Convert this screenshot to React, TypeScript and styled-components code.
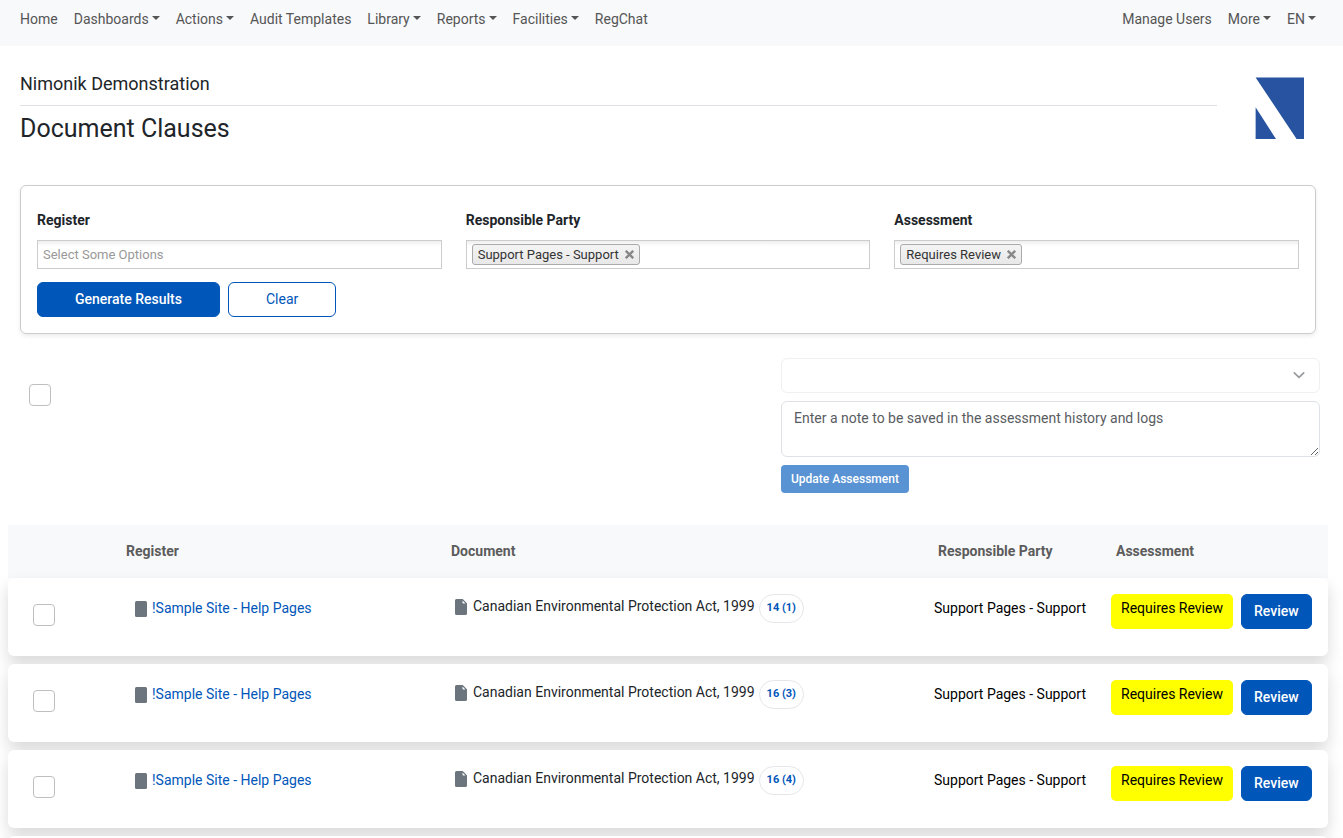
import React from "react";
import styled, { createGlobalStyle } from "styled-components";

const GlobalStyle = createGlobalStyle`
  *, *::before, *::after { box-sizing: border-box; }
  html { scrollbar-width: none; }
  body {
    margin: 0;
    background: #fff;
    color: #212529;
    font-family: Roboto, "Liberation Sans", sans-serif;
    font-size: 14px;
    line-height: 21px;
  }
  button, input, select, textarea { font: inherit; }
`;

const blue = "#0056b9";

const NavBar = styled.nav`
  display: flex;
  justify-content: space-between;
  height: 46px;
  padding: 9px 27px 0 20px;
  background: #f8f9fb;
`;

const NavGroup = styled.div`
  display: flex;
  gap: 16px;
`;

const NavLink = styled.a<{ $menu?: boolean }>`
  display: flex;
  align-items: center;
  height: 21px;
  color: #555;
  text-decoration: none;
  white-space: nowrap;

  &::after {
    content: "";
    display: ${(p) => (p.$menu ? "block" : "none")};
    margin: 0 0 4px 3px;
    border: 4px solid transparent;
    border-top-color: currentColor;
    border-bottom: 0;
  }
`;

const Masthead = styled.header`
  display: flex;
  justify-content: space-between;
  gap: 38px;
  padding: 28px 39px 0 20px;
`;

const Titles = styled.div`
  flex: 1;
`;

const Company = styled.h2`
  margin: 0;
  padding-bottom: 11px;
  border-bottom: 1px solid #dee2e6;
  font-size: 18px;
  line-height: 20px;
  font-weight: 400;
`;

const PageTitle = styled.h1`
  margin: 8px 0 0;
  font-size: 25px;
  line-height: 30px;
  font-weight: 400;
`;

const Logo = styled.svg`
  display: block;
  width: 49px;
  height: 62px;
  margin-top: 3px;
`;

const FilterCard = styled.form`
  margin: 41px 27px 0 20px;
  padding: 24px 16px 16px;
  border: 1px solid #ccc;
  border-radius: 6px;
  box-shadow: 0 2px 4px rgba(0, 0, 0, 0.08);
`;

const FilterGrid = styled.div`
  display: grid;
  grid-template-columns: repeat(3, minmax(0, 1fr));
  gap: 24px;
`;

const FieldLabel = styled.label`
  display: block;
  margin-bottom: 9px;
  font-weight: 700;
`;

const ChoiceBox = styled.div`
  display: flex;
  align-items: center;
  gap: 4px;
  height: 29px;
  padding: 0 5px;
  border: 1px solid #ccc;
  background: linear-gradient(#eee 0, #fff 5px);
`;

const ChoiceInput = styled.input`
  flex: 1;
  min-width: 0;
  padding: 0;
  border: 0;
  outline: 0;
  background: transparent;
  color: #222;
  font-size: 13px;
  &::placeholder { color: #999; opacity: 1; }
`;

const Chip = styled.span`
  display: flex;
  align-items: center;
  gap: 6px;
  height: 21px;
  padding: 0 5px;
  border: 1px solid #aaa;
  border-radius: 3px;
  background: linear-gradient(#f4f4f4, #e8e8e8);
  color: #333;
  font-size: 13px;
  white-space: nowrap;
`;

const ChipRemove = styled.button`
  display: flex;
  padding: 0;
  border: 0;
  background: none;
  color: #888;
`;

const Actions = styled.div`
  display: flex;
  gap: 8px;
  margin-top: 13px;
`;

const Button = styled.button<{ $outline?: boolean; $wide?: boolean }>`
  height: 35px;
  padding: 0 ${(p) => (p.$wide ? "37px" : "12px")};
  border: 1px solid ${blue};
  border-radius: 6px;
  background: ${(p) => (p.$outline ? "#fff" : blue)};
  color: ${(p) => (p.$outline ? blue : "#fff")};
  font-weight: ${(p) => (p.$outline ? 400 : 500)};
  white-space: nowrap;
`;

const BulkBar = styled.section`
  display: flex;
  justify-content: space-between;
  padding: 24px 23px 32px 29px;
`;

const Check = styled.input`
  appearance: none;
  display: block;
  width: 22px;
  height: 22px;
  margin: 0;
  border: 1px solid #bfbfbf;
  border-radius: 4px;
  background: #fff;
`;

const BulkCheck = styled.label`
  padding-top: 26px;
`;

const BulkForm = styled.form`
  display: flex;
  flex-direction: column;
  align-items: flex-start;
  gap: 8px;
  width: 42%;
  max-width: 539px;
`;

const SelectWrap = styled.div`
  position: relative;
  width: 100%;
  opacity: 0.5;

  svg {
    position: absolute;
    right: 14px;
    top: 11px;
    pointer-events: none;
  }
`;

const Select = styled.select`
  appearance: none;
  display: block;
  width: 100%;
  height: 35px;
  padding: 0 12px;
  border: 1px solid #dee2e6;
  border-radius: 6px;
  background: #fff;
  opacity: 1;
`;

const Note = styled.textarea`
  display: block;
  width: 100%;
  height: 56px;
  padding: 6px 12px;
  border: 1px solid #dee2e6;
  border-radius: 6px;
  resize: vertical;
  &::placeholder { color: #595c5f; opacity: 1; }
`;

const UpdateButton = styled.button`
  height: 28px;
  padding: 0 10px;
  border: 0;
  border-radius: 4px;
  background: #5993d4;
  color: #fff;
  font-size: 12px;
  font-weight: 500;
  white-space: nowrap;
`;

const Table = styled.table`
  display: block;
  margin: 0 15px 0 8px;
`;

const TableHead = styled.thead`
  display: block;
  background: #f8f9fb;
`;

const HeadRow = styled.tr`
  display: grid;
  grid-template-columns: 118fr 325fr 487fr 178fr 212fr;
  height: 53px;
  align-items: center;
`;

const HeadCell = styled.th`
  padding: 0;
  color: #5c5c5c;
  font-weight: 700;
  text-align: left;
`;

const TableBody = styled.tbody`
  display: flex;
  flex-direction: column;
  gap: 8px;
`;

const Row = styled.tr`
  display: grid;
  grid-template-columns: 111fr 320fr 479fr 177fr 201fr;
  height: 78px;
  padding: 16px 16px 0;
  border-radius: 6px;
  background: #fff;
  box-shadow: 0 8px 16px rgba(0, 0, 0, 0.15);
`;

const Cell = styled.td<{ $top?: number; $left?: number; $gap?: number }>`
  display: flex;
  align-items: flex-start;
  gap: ${(p) => p.$gap ?? 0}px;
  min-width: 0;
  padding: ${(p) => p.$top ?? 0}px 0 0 ${(p) => p.$left ?? 0}px;
  color: #000;
  white-space: nowrap;
`;

const RegisterLink = styled.a`
  color: ${blue};
  text-decoration: none;
`;

const DocName = styled.span`
  padding-top: 2px;
  color: #212529;
`;

const CountPill = styled.a`
  display: flex;
  align-items: center;
  height: 29px;
  padding: 0 7px 2px;
  border: 1px solid #e4e6ea;
  border-radius: 15px;
  color: ${blue};
  font-size: 11px;
  font-weight: 700;
  text-decoration: none;
`;

const DocTitle = styled.div`
  display: flex;
  gap: 6px;
`;

const Status = styled.span`
  height: 35px;
  padding: 4px 10px 0;
  border-radius: 5px;
  background: #ff0;
`;

const RowIcon = styled.svg<{ $top: number }>`
  flex: none;
  display: block;
  width: 12px;
  height: 16px;
  margin-top: ${(p) => p.$top}px;
  fill: #6c757d;
`;

const leftNav: { label: string; menu?: boolean }[] = [
  { label: "Home" },
  { label: "Dashboards", menu: true },
  { label: "Actions", menu: true },
  { label: "Audit Templates" },
  { label: "Library", menu: true },
  { label: "Reports", menu: true },
  { label: "Facilities", menu: true },
  { label: "RegChat" },
];

const rightNav: { label: string; menu?: boolean }[] = [
  { label: "Manage Users" },
  { label: "More", menu: true },
  { label: "EN", menu: true },
];

const filters: { id: string; label: string; chosen?: string }[] = [
  { id: "register", label: "Register" },
  { id: "party", label: "Responsible Party", chosen: "Support Pages - Support" },
  { id: "assessment", label: "Assessment", chosen: "Requires Review" },
];

const counts = ["14 (1)", "16 (3)", "16 (4)"];

function NavItems({ items }: { items: { label: string; menu?: boolean }[] }) {
  return (
    <NavGroup>
      {items.map((item) => (
        <NavLink key={item.label} href="#" $menu={item.menu}>
          {item.label}
        </NavLink>
      ))}
    </NavGroup>
  );
}

function ClauseRow({ count }: { count: string }) {
  return (
    <Row>
      <Cell $top={10} $left={9}>
        <Check type="checkbox" aria-label={`Select clause ${count}`} />
      </Cell>
      <Cell $top={4} $gap={5}>
        <RowIcon $top={3} viewBox="0 0 12 16">
          <rect width="12" height="16" rx="1.5" />
        </RowIcon>
        <RegisterLink href="#">!Sample Site - Help Pages</RegisterLink>
      </Cell>
      <Cell $gap={4}>
        <DocTitle>
          <RowIcon $top={5} viewBox="0 0 12 16">
            <path
              fillRule="evenodd"
              d="M1.5 0H7.3A1 1 0 0 1 8 .3L11.7 4A1 1 0 0 1 12 4.7V14.5A1.5 1.5 0 0 1 10.500 16H1.5A1.500 1.500 0 0 1 0 14.5V1.5A1.500 1.500 0 0 1 1.500 0M7.500 1.500V3.500A1 1 0 0 0 8.500 4.500H10.500Z"
            />
          </RowIcon>
          <DocName>Canadian Environmental Protection Act, 1999</DocName>
        </DocTitle>
        <CountPill href="#">{count}</CountPill>
      </Cell>
      <Cell $top={4}>Support Pages - Support</Cell>
      <Cell $gap={8}>
        <Status>Requires Review</Status>
        <Button type="button">Review</Button>
      </Cell>
    </Row>
  );
}

export default function App() {
  return (
    <>
      <GlobalStyle />
      <NavBar>
        <NavItems items={leftNav} />
        <NavItems items={rightNav} />
      </NavBar>

      <Masthead>
        <Titles>
          <Company>Nimonik Demonstration</Company>
          <PageTitle>Document Clauses</PageTitle>
        </Titles>
        <Logo viewBox="0 0 49 62" fill="#2853a1" aria-label="Nimonik">
          <path d="M0.6 0.5H49V62H41.6Z" />
          <path d="M0.6 30.3L21 62H0.6Z" />
        </Logo>
      </Masthead>

      <main>
        <FilterCard>
          <FilterGrid>
            {filters.map((f) => (
              <div key={f.id}>
                <FieldLabel htmlFor={f.id}>{f.label}</FieldLabel>
                <ChoiceBox>
                  {f.chosen && (
                    <Chip>
                      {f.chosen}
                      <ChipRemove type="button" aria-label={`Remove ${f.chosen}`}>
                        <svg width="9" height="9" viewBox="0 0 9 9" stroke="currentColor" strokeWidth="2.4">
                          <path d="M0.8 0.8L8.2 8.2M8.2 0.8L0.8 8.2" />
                        </svg>
                      </ChipRemove>
                    </Chip>
                  )}
                  <ChoiceInput id={f.id} type="text" placeholder={f.chosen ? undefined : "Select Some Options"} />
                </ChoiceBox>
              </div>
            ))}
          </FilterGrid>
          <Actions>
            <Button type="button" $wide>Generate Results</Button>
            <Button type="button" $wide $outline>Clear</Button>
          </Actions>
        </FilterCard>

        <BulkBar>
          <BulkCheck>
            <Check type="checkbox" aria-label="Select all clauses" />
          </BulkCheck>
          <BulkForm>
            <SelectWrap>
              <Select disabled aria-label="Assessment status" />
              <svg width="14" height="12" viewBox="0 0 14 12" fill="none" stroke="#343a40" strokeWidth="1.7" strokeLinecap="round" strokeLinejoin="round">
                <path d="M2.3 3.8L7 8.4L11.7 3.8" />
              </svg>
            </SelectWrap>
            <Note aria-label="Assessment note" placeholder="Enter a note to be saved in the assessment history and logs" />
            <UpdateButton type="button">Update Assessment</UpdateButton>
          </BulkForm>
        </BulkBar>

        <Table>
          <TableHead>
            <HeadRow>
              <HeadCell aria-label="Select" />
              <HeadCell>Register</HeadCell>
              <HeadCell>Document</HeadCell>
              <HeadCell>Responsible Party</HeadCell>
              <HeadCell>Assessment</HeadCell>
            </HeadRow>
          </TableHead>
          <TableBody>
            {counts.map((count) => (
              <ClauseRow key={count} count={count} />
            ))}
            <Row aria-hidden="true" />
          </TableBody>
        </Table>
      </main>
    </>
  );
}
